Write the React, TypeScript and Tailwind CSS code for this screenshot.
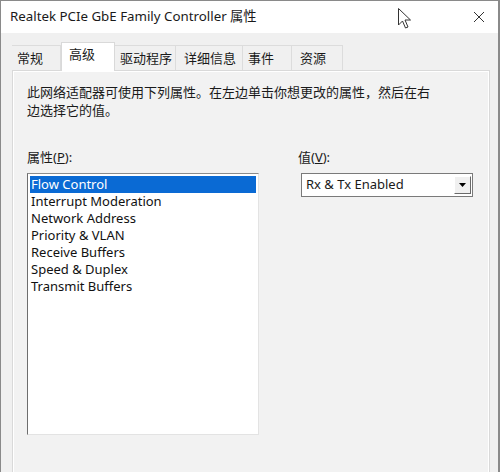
import React from "react";

const font = { fontFamily: '"Noto Sans", "Noto Sans CJK SC", sans-serif' };

const tabs = [
  { label: "常规", w: "w-[49px]", pl: "pl-[5px]" },
  { label: "高级", w: "w-[54px]", pl: "pl-[7px]", active: true },
  { label: "驱动程序", w: "w-[61px]", pl: "pl-[5px]" },
  { label: "详细信息", w: "w-[67px]", pl: "pl-[8px]" },
  { label: "事件", w: "w-[49px]", pl: "pl-[5px]" },
  { label: "资源", w: "w-[51px]", pl: "pl-[8px]" },
];

const items = [
  "Flow Control",
  "Interrupt Moderation",
  "Network Address",
  "Priority & VLAN",
  "Receive Buffers",
  "Speed & Duplex",
  "Transmit Buffers",
];

export default function App() {
  return (
    <div
      className="relative w-[500px] h-[472px] overflow-hidden bg-[#f0f0f0] border-l border-t border-r-2 border-[#8a8a8a] text-[#1a1a1a] flex flex-col"
      style={font}
    >
      {/* Title bar */}
      <div className="h-[32px] bg-white flex items-center pl-[9px] pr-[12px] shrink-0">
        <span className="text-[13.3px] leading-none">Realtek PCIe GbE Family Controller 属性</span>
        <div className="flex-1" />
        <svg width="12" height="12" viewBox="0 0 12 12" className="mr-[1px]">
          <path d="M1 1 L11 11 M11 1 L1 11" stroke="#333" strokeWidth="1" fill="none" />
        </svg>
      </div>

      {/* Tabs */}
      <div className="flex items-end pl-[11px] pt-[9px] h-[37px] shrink-0">
        {tabs.map((t) =>
          t.active ? (
            <div
              key={t.label}
              className={`${t.w} ${t.pl} h-[29px] bg-white border-t border-l border-r border-[#d9d9d9] relative z-10 -mb-px text-[13px] leading-[18px] pt-[2px]`}
            >
              {t.label}
            </div>
          ) : (
            <div
              key={t.label}
              className={`${t.w} ${t.pl} h-[25px] bg-[#f0f0f0] border-t border-r border-[#dcdcdc] text-[13px] leading-[18px] pt-[3px]`}
            >
              {t.label}
            </div>
          )
        )}
      </div>

      {/* Panel */}
      <div className="ml-[11px] mr-[8px] flex-1 border-t border-l border-r border-[#d9d9d9] bg-[#f2f2f2] relative">
        <div className="absolute inset-0 border-t border-l border-r border-white pointer-events-none" />
        <div className="pl-[14px] pt-[12px] text-[13px] leading-[18px]">
          <p>此网络适配器可使用下列属性。在左边单击你想更改的属性，然后在右</p>
          <p>边选择它的值。</p>
        </div>

        <div className="flex pl-[14px] pt-[29px]">
          {/* Left column */}
          <div className="w-[271px]">
            <div className="text-[13px] leading-[18px] mb-[7px]">
              属性(<span className="underline">P</span>):
            </div>
            <div className="w-[232px] h-[262px] bg-white border-t border-l border-t-[#8c8c8c] border-l-[#6e6e6e] border-b border-r border-b-[#e3e3e3] border-r-[#e3e3e3] p-[2px]">
              {items.map((it, i) => (
                <div
                  key={it}
                  className={`h-[17px] leading-[17px] pl-[1px] text-[13px] ${
                    i === 0 ? "bg-[#0a6ad4] text-white" : "text-[#111]"
                  }`}
                >
                  {it}
                </div>
              ))}
            </div>
          </div>

          {/* Right column */}
          <div className="w-[176px]">
            <div className="text-[13px] leading-[18px] mb-[7px]">
              值(<span className="underline">V</span>):
            </div>
            <div className="ml-[3px] w-[172px] h-[24px] bg-white border border-[#7a7a7a] flex items-center">
              <span className="pl-[4px] text-[13px] flex-1">Rx &amp; Tx Enabled</span>
              <div className="w-[17px] h-[18px] mr-[1px] bg-[#f0f0f0] border-t border-l border-white border-b border-r border-b-[#6a6a6a] border-r-[#6a6a6a] flex items-center justify-center">
                <svg width="7" height="4" viewBox="0 0 7 4">
                  <path d="M0 0 L7 0 L3.5 4 Z" fill="#000" />
                </svg>
              </div>
            </div>
          </div>
        </div>
      </div>

      {/* Mouse cursor */}
      <svg
        className="absolute left-[396px] top-[6px]"
        width="15"
        height="23"
        viewBox="0 0 15 23"
      >
        <path
          d="M1.5 1.5 L1.5 18 L5.5 14 L8.5 21 L11 20 L8 13 L13.5 13 Z"
          fill="#fff"
          stroke="#333"
          strokeWidth="1"
          strokeLinejoin="miter"
        />
      </svg>
    </div>
  );
}
